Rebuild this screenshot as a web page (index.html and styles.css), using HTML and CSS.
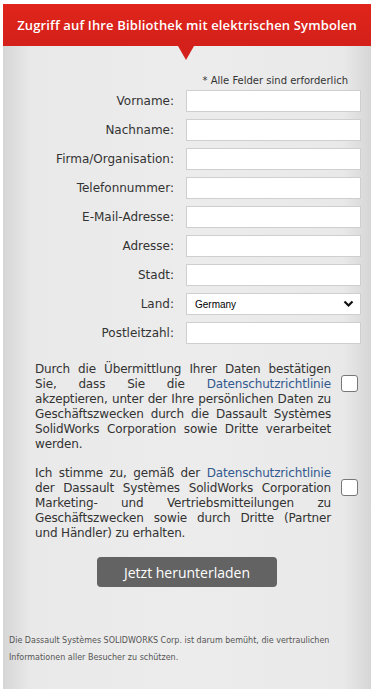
FILE: index.html
```html
<!DOCTYPE html>
<html lang="de">
	<head>
		<meta charset="UTF-8" />
		<meta name="viewport" content="width=device-width, initial-scale=1.0" />
		<title>Bibliothek mit elektrischen Symbolen</title>
		<link rel="stylesheet" href="styles.css">
	</head>
	<body>
		<div class="panel">
			<div class="header">
				<h1>Zugriff auf Ihre Bibliothek mit elektrischen Symbolen</h1>
			</div>
			<form class="form" id="download-form">
				<p class="required">* Alle Felder sind erforderlich</p>
				<div class="row">
					<label for="vorname">Vorname:</label>
					<input type="text" id="vorname" />
				</div>
				<div class="row">
					<label for="nachname">Nachname:</label>
					<input type="text" id="nachname" />
				</div>
				<div class="row">
					<label for="firma">Firma/Organisation:</label>
					<input type="text" id="firma" />
				</div>
				<div class="row">
					<label for="telefon">Telefonnummer:</label>
					<input type="text" id="telefon" />
				</div>
				<div class="row">
					<label for="email">E-Mail-Adresse:</label>
					<input type="email" id="email" />
				</div>
				<div class="row">
					<label for="adresse">Adresse:</label>
					<input type="text" id="adresse" />
				</div>
				<div class="row">
					<label for="stadt">Stadt:</label>
					<input type="text" id="stadt" />
				</div>
				<div class="row">
					<label for="land">Land:</label>
					<div class="select">
						<span>Germany</span>
						<svg width="11" height="8" viewBox="0 0 11 8"><path d="M1.5 1.5 L5.5 5.5 L9.5 1.5" fill="none" stroke="#111" stroke-width="2.2"/></svg>
					</div>
				</div>
				<div class="row">
					<label for="plz">Postleitzahl:</label>
					<input type="text" id="plz" />
				</div>

				<div class="consent">
					<p>Durch die Übermittlung Ihrer Daten bestätigen Sie, dass Sie die <a href="#">Datenschutzrichtlinie</a> akzeptieren, unter der Ihre persönlichen Daten zu Geschäftszwecken durch die Dassault Systèmes SolidWorks Corporation sowie Dritte verarbeitet werden.</p>
					<span class="check"></span>
				</div>
				<div class="consent">
					<p>Ich stimme zu, gemäß der <a href="#">Datenschutzrichtlinie</a> der Dassault Systèmes SolidWorks Corporation Marketing- und Vertriebsmitteilungen zu Geschäftszwecken sowie durch Dritte (Partner und Händler) zu erhalten.</p>
					<span class="check"></span>
				</div>

				<div class="actions">
					<button type="button">Jetzt herunterladen</button>
				</div>
			</form>
			<p class="footer">Die Dassault Systèmes SOLIDWORKS Corp. ist darum bemüht, die vertraulichen Informationen aller Besucher zu schützen.</p>
		</div>
	</body>
</html>
```

FILE: styles.css
```css
body {
	margin: 0;
	background: #fff;
	font-family: 'DejaVu Sans', Verdana, sans-serif;
	color: #333;
}
.panel {
	width: 368px;
	margin: 4px 0 0 3px;
	height: 685px;
	display: flex;
	flex-direction: column;
	background: linear-gradient(to right, #d6d6d6 0, #e9e9e9 28px, #ececec 50%, #e9e9e9 calc(100% - 28px), #d6d6d6 100%);
}
.header {
	position: relative;
	height: 42px;
	background: linear-gradient(to bottom, #e0251b, #d3201a);
	display: flex;
	align-items: center;
	justify-content: center;
}
.header::after {
	content: '';
	position: absolute;
	left: 175px;
	top: 42px;
	border-left: 8px solid transparent;
	border-right: 8px solid transparent;
	border-top: 14px solid #d3201a;
}
h1 {
	margin: 0;
	color: #fff;
	font-family: 'Open Sans', sans-serif;
	font-weight: 600;
	font-size: 13px;
	letter-spacing: 0.15px;
}
.form {
	padding: 0 10px 0 0;
}
.required {
	margin: 29px 0 3px;
	text-align: right;
	padding-right: 13px;
	font-size: 10px;
	line-height: 12px;
}
.row {
	display: flex;
	align-items: center;
	margin-bottom: 7px;
}
.row label {
	width: 171px;
	text-align: right;
	font-size: 12px;
	padding-right: 12px;
}
.row input,
.select {
	box-sizing: border-box;
	width: 175px;
	height: 22px;
	margin: 0;
	border: 1px solid #cfcfcf;
	background: #fff;
}
.select {
	display: flex;
	align-items: center;
	justify-content: space-between;
	padding: 0 6px 0 8px;
	font-family: 'Liberation Sans', Arial, sans-serif;
	font-size: 10px;
	color: #000;
}
.consent {
	display: flex;
	align-items: flex-start;
	padding-left: 32px;
	margin-top: 18px;
}
.consent + .consent {
	margin-top: 14px;
}
.consent p {
	margin: 0;
	width: 296px;
	font-size: 12px;
	letter-spacing: -0.15px;
	line-height: 15px;
	text-align: justify;
}
.consent a {
	color: #33598f;
	text-decoration: none;
}
.check {
	flex: none;
	width: 15px;
	height: 15px;
	margin: 13px 0 0 10px;
	border: 1px solid #777;
	border-radius: 3px;
	background: #fff;
}
.actions {
	text-align: center;
	padding-left: 10px;
	margin-top: 16px;
}
button {
	width: 180px;
	height: 30px;
	border: none;
	border-radius: 4px;
	background: #636363;
	color: #fff;
	font-family: 'Open Sans', sans-serif;
	font-size: 14px;
	cursor: pointer;
}
.footer {
	margin: 45px 0 0;
	padding: 0 6px;
	font-size: 8px;
	line-height: 17px;
	color: #555;
}
```
